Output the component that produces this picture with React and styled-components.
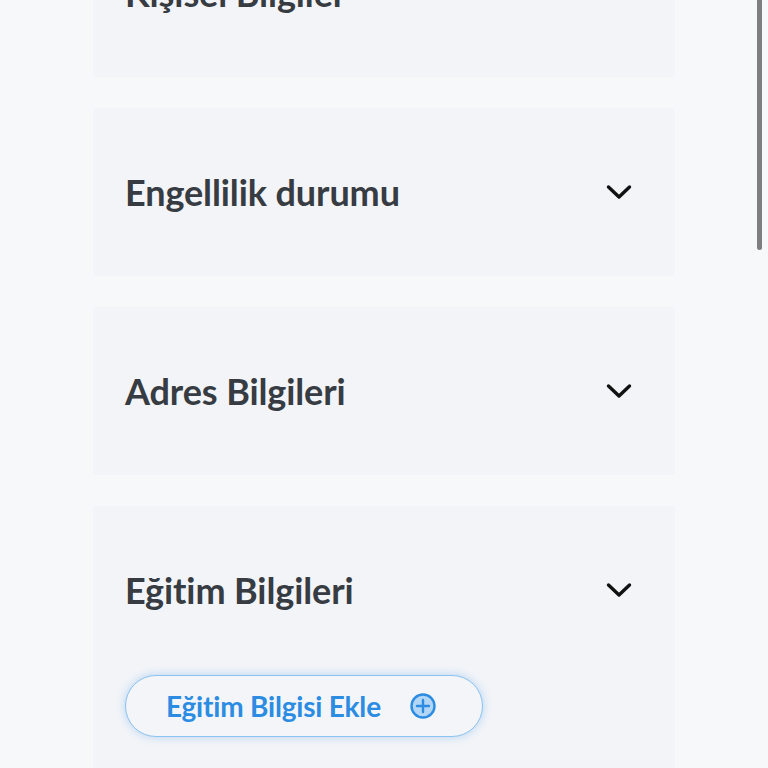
import React from 'react';
import styled, { createGlobalStyle } from 'styled-components';

const GlobalStyle = createGlobalStyle`
    html, body {
        margin: 0;
        padding: 0;
        background-color: #f7f8fa;
        font-family: "Lato", "Noto Sans", sans-serif;
        overflow: hidden;
    }
`;

const Page = styled.div`
    position: relative;
    width: 768px;
    height: 768px;
    overflow: hidden;
`;

const List = styled.div`
    display: flex;
    flex-direction: column;
    gap: 31px;
    width: 582px;
    margin: -91px 0 0 93px;
`;

const Section = styled.div`
    background-color: #f2f4f8;
    border-radius: 4px;
    padding: 0 43px 0 32px;
    min-height: 168px;
    box-sizing: border-box;
    display: flex;
    flex-direction: column;
`;

const Header = styled.div`
    display: flex;
    align-items: center;
    justify-content: space-between;
    height: 168px;
`;

const Title = styled.h2`
    margin: 0;
    font-size: 36px;
    font-weight: 700;
    color: #373b42;
    letter-spacing: -0.1px;
`;

const Chevron = styled.svg`
    width: 26px;
    height: 16px;
`;

const AddButton = styled.button`
    display: flex;
    align-items: center;
    gap: 28px;
    width: 358px;
    height: 62px;
    margin: 1px 0 40px;
    padding: 0 0 0 40px;
    border: 1.5px solid #8cc3f0;
    border-radius: 31px;
    background-color: #f3f5f9;
    box-shadow: 0 0 8px rgba(66, 150, 230, 0.35);
    color: #2b8ce2;
    font-family: inherit;
    font-size: 28px;
    font-weight: 700;
    letter-spacing: -0.2px;
    white-space: nowrap;
    box-sizing: border-box;

    svg {
        flex-shrink: 0;
    }
`;

const Scrollbar = styled.div`
    position: absolute;
    top: -4px;
    right: 6px;
    width: 5px;
    height: 254px;
    border-radius: 3px;
    background-color: #7e7e80;
`;

const sections = [
    { title: 'Kişisel Bilgiler' },
    { title: 'Engellilik durumu' },
    { title: 'Adres Bilgileri' },
    { title: 'Eğitim Bilgileri', action: 'Eğitim Bilgisi Ekle' },
];

const ChevronIcon = () => (
    <Chevron viewBox="0 0 26 16">
        <path d="M2.5 3 L13 13 L23.5 3" fill="none" stroke="#111" strokeWidth="3.4" strokeLinecap="round" strokeLinejoin="round" />
    </Chevron>
);

const PlusIcon = () => (
    <svg width="28" height="28" viewBox="0 0 28 28">
        <circle cx="14" cy="14" r="11.5" fill="#b4d6f6" stroke="#2b8ce2" strokeWidth="2.4" />
        <path d="M14 8 V20 M8 14 H20" stroke="#2b8ce2" strokeWidth="2.4" strokeLinecap="round" />
    </svg>
);

const App = () => (
    <Page>
        <GlobalStyle />
        <List>
            {sections.map(section => (
                <Section key={section.title}>
                    <Header>
                        <Title>{section.title}</Title>
                        <ChevronIcon />
                    </Header>
                    {section.action && (
                        <AddButton>
                            {section.action}
                            <PlusIcon />
                        </AddButton>
                    )}
                </Section>
            ))}
        </List>
        <Scrollbar />
    </Page>
);

export default App;
